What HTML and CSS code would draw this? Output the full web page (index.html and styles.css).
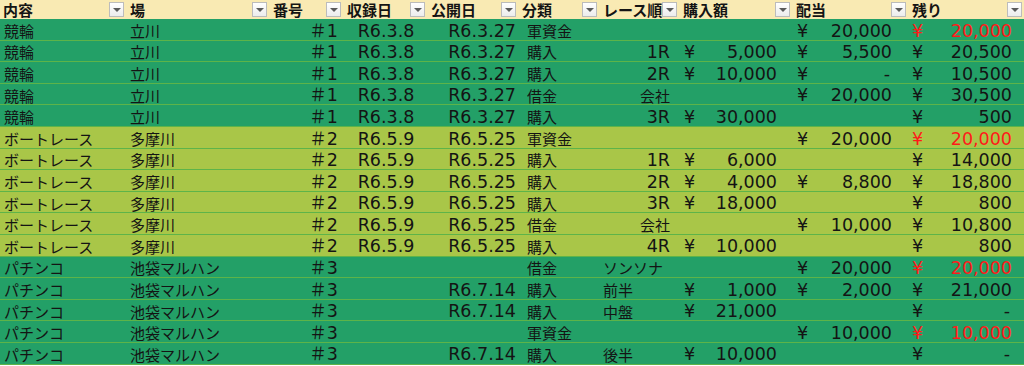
FILE: index.html
```html
<!DOCTYPE html>
<html lang="ja">
<head>
<meta charset="utf-8">
<title>収支表</title>
<link rel="stylesheet" href="styles.css">
</head>
<body>
<div class="sheet">
  <div class="row head">
    <div class="hc"><span class="hl">内容</span><span class="dd"></span></div>
    <div class="hc"><span class="hl">場</span><span class="dd"></span></div>
    <div class="hc"><span class="hl">番号</span><span class="dd"></span></div>
    <div class="hc"><span class="hl">収録日</span><span class="dd"></span></div>
    <div class="hc"><span class="hl">公開日</span><span class="dd"></span></div>
    <div class="hc"><span class="hl">分類</span><span class="dd"></span></div>
    <div class="hc"><span class="hl">レース順</span><span class="dd"></span></div>
    <div class="hc"><span class="hl">購入額</span><span class="dd"></span></div>
    <div class="hc"><span class="hl">配当</span><span class="dd"></span></div>
    <div class="hc last"><span class="hl">残り</span><span class="dd"></span></div>
  </div>

  <div class="row g">
    <div class="c k1">競輪</div><div class="c k2">立川</div><div class="c k3 num">＃1</div>
    <div class="c k4 num">R6.3.8</div><div class="c k5 num">R6.3.27</div><div class="c k6">軍資金</div>
    <div class="c k7"></div><div class="c k8"></div>
    <div class="c k9 acc num"><span>¥</span><span>20,000</span></div>
    <div class="c k10 acc num red"><span>¥</span><span>20,000</span></div>
  </div>
  <div class="row g">
    <div class="c k1">競輪</div><div class="c k2">立川</div><div class="c k3 num">＃1</div>
    <div class="c k4 num">R6.3.8</div><div class="c k5 num">R6.3.27</div><div class="c k6">購入</div>
    <div class="c k7 r num">1R</div>
    <div class="c k8 acc num"><span>¥</span><span>5,000</span></div>
    <div class="c k9 acc num"><span>¥</span><span>5,500</span></div>
    <div class="c k10 acc num"><span>¥</span><span>20,500</span></div>
  </div>
  <div class="row g">
    <div class="c k1">競輪</div><div class="c k2">立川</div><div class="c k3 num">＃1</div>
    <div class="c k4 num">R6.3.8</div><div class="c k5 num">R6.3.27</div><div class="c k6">購入</div>
    <div class="c k7 r num">2R</div>
    <div class="c k8 acc num"><span>¥</span><span>10,000</span></div>
    <div class="c k9 acc num"><span>¥</span><span class="dash">-</span></div>
    <div class="c k10 acc num"><span>¥</span><span>10,500</span></div>
  </div>
  <div class="row g">
    <div class="c k1">競輪</div><div class="c k2">立川</div><div class="c k3 num">＃1</div>
    <div class="c k4 num">R6.3.8</div><div class="c k5 num">R6.3.27</div><div class="c k6">借金</div>
    <div class="c k7 r">会社</div><div class="c k8"></div>
    <div class="c k9 acc num"><span>¥</span><span>20,000</span></div>
    <div class="c k10 acc num"><span>¥</span><span>30,500</span></div>
  </div>
  <div class="row g">
    <div class="c k1">競輪</div><div class="c k2">立川</div><div class="c k3 num">＃1</div>
    <div class="c k4 num">R6.3.8</div><div class="c k5 num">R6.3.27</div><div class="c k6">購入</div>
    <div class="c k7 r num">3R</div>
    <div class="c k8 acc num"><span>¥</span><span>30,000</span></div>
    <div class="c k9"></div>
    <div class="c k10 acc num"><span>¥</span><span>500</span></div>
  </div>

  <div class="row l">
    <div class="c k1">ボートレース</div><div class="c k2">多摩川</div><div class="c k3 num">＃2</div>
    <div class="c k4 num">R6.5.9</div><div class="c k5 num">R6.5.25</div><div class="c k6">軍資金</div>
    <div class="c k7"></div><div class="c k8"></div>
    <div class="c k9 acc num"><span>¥</span><span>20,000</span></div>
    <div class="c k10 acc num red"><span>¥</span><span>20,000</span></div>
  </div>
  <div class="row l">
    <div class="c k1">ボートレース</div><div class="c k2">多摩川</div><div class="c k3 num">＃2</div>
    <div class="c k4 num">R6.5.9</div><div class="c k5 num">R6.5.25</div><div class="c k6">購入</div>
    <div class="c k7 r num">1R</div>
    <div class="c k8 acc num"><span>¥</span><span>6,000</span></div>
    <div class="c k9"></div>
    <div class="c k10 acc num"><span>¥</span><span>14,000</span></div>
  </div>
  <div class="row l">
    <div class="c k1">ボートレース</div><div class="c k2">多摩川</div><div class="c k3 num">＃2</div>
    <div class="c k4 num">R6.5.9</div><div class="c k5 num">R6.5.25</div><div class="c k6">購入</div>
    <div class="c k7 r num">2R</div>
    <div class="c k8 acc num"><span>¥</span><span>4,000</span></div>
    <div class="c k9 acc num"><span>¥</span><span>8,800</span></div>
    <div class="c k10 acc num"><span>¥</span><span>18,800</span></div>
  </div>
  <div class="row l">
    <div class="c k1">ボートレース</div><div class="c k2">多摩川</div><div class="c k3 num">＃2</div>
    <div class="c k4 num">R6.5.9</div><div class="c k5 num">R6.5.25</div><div class="c k6">購入</div>
    <div class="c k7 r num">3R</div>
    <div class="c k8 acc num"><span>¥</span><span>18,000</span></div>
    <div class="c k9"></div>
    <div class="c k10 acc num"><span>¥</span><span>800</span></div>
  </div>
  <div class="row l">
    <div class="c k1">ボートレース</div><div class="c k2">多摩川</div><div class="c k3 num">＃2</div>
    <div class="c k4 num">R6.5.9</div><div class="c k5 num">R6.5.25</div><div class="c k6">借金</div>
    <div class="c k7 r">会社</div><div class="c k8"></div>
    <div class="c k9 acc num"><span>¥</span><span>10,000</span></div>
    <div class="c k10 acc num"><span>¥</span><span>10,800</span></div>
  </div>
  <div class="row l">
    <div class="c k1">ボートレース</div><div class="c k2">多摩川</div><div class="c k3 num">＃2</div>
    <div class="c k4 num">R6.5.9</div><div class="c k5 num">R6.5.25</div><div class="c k6">購入</div>
    <div class="c k7 r num">4R</div>
    <div class="c k8 acc num"><span>¥</span><span>10,000</span></div>
    <div class="c k9"></div>
    <div class="c k10 acc num"><span>¥</span><span>800</span></div>
  </div>

  <div class="row g">
    <div class="c k1">パチンコ</div><div class="c k2">池袋マルハン</div><div class="c k3 num">＃3</div>
    <div class="c k4"></div><div class="c k5"></div><div class="c k6">借金</div>
    <div class="c k7 lft">ソンソナ</div><div class="c k8"></div>
    <div class="c k9 acc num"><span>¥</span><span>20,000</span></div>
    <div class="c k10 acc num red"><span>¥</span><span>20,000</span></div>
  </div>
  <div class="row g">
    <div class="c k1">パチンコ</div><div class="c k2">池袋マルハン</div><div class="c k3 num">＃3</div>
    <div class="c k4"></div><div class="c k5 num">R6.7.14</div><div class="c k6">購入</div>
    <div class="c k7 lft">前半</div>
    <div class="c k8 acc num"><span>¥</span><span>1,000</span></div>
    <div class="c k9 acc num"><span>¥</span><span>2,000</span></div>
    <div class="c k10 acc num"><span>¥</span><span>21,000</span></div>
  </div>
  <div class="row g">
    <div class="c k1">パチンコ</div><div class="c k2">池袋マルハン</div><div class="c k3 num">＃3</div>
    <div class="c k4"></div><div class="c k5 num">R6.7.14</div><div class="c k6">購入</div>
    <div class="c k7 lft">中盤</div>
    <div class="c k8 acc num"><span>¥</span><span>21,000</span></div>
    <div class="c k9"></div>
    <div class="c k10 acc num"><span>¥</span><span class="dash">-</span></div>
  </div>
  <div class="row g">
    <div class="c k1">パチンコ</div><div class="c k2">池袋マルハン</div><div class="c k3 num">＃3</div>
    <div class="c k4"></div><div class="c k5"></div><div class="c k6">軍資金</div>
    <div class="c k7"></div><div class="c k8"></div>
    <div class="c k9 acc num"><span>¥</span><span>10,000</span></div>
    <div class="c k10 acc num red"><span>¥</span><span>10,000</span></div>
  </div>
  <div class="row g">
    <div class="c k1">パチンコ</div><div class="c k2">池袋マルハン</div><div class="c k3 num">＃3</div>
    <div class="c k4"></div><div class="c k5 num">R6.7.14</div><div class="c k6">購入</div>
    <div class="c k7 lft">後半</div>
    <div class="c k8 acc num"><span>¥</span><span>10,000</span></div>
    <div class="c k9"></div>
    <div class="c k10 acc num"><span>¥</span><span class="dash">-</span></div>
  </div>
</div>
</body>
</html>
```

FILE: styles.css
```css
html, body {
  margin: 0;
  padding: 0;
  background: #ffffff;
}

body {
  font-family: "Noto Sans CJK JP", sans-serif;
  font-size: 15px;
  color: #141414;
  overflow: hidden;
}

.sheet {
  width: 1024px;
}

.row {
  display: grid;
  grid-template-columns: 127px 143px 74px 84px 91px 81px 80px 113px 116px 115px;
  height: 21.6px;
  box-sizing: border-box;
  border-bottom: 1px solid #5db449;
}

.head {
  height: 19px;
  background: #f9eab3;
  border-bottom: none;
}

.g { background: #23a067; }
.l { background: #a9c648; }

/* header cells */
.hc {
  display: flex;
  align-items: center;
  justify-content: space-between;
  padding: 0 3px 0 3px;
  min-width: 0;
  font-weight: 700;
  font-size: 15px;
  line-height: 1;
  white-space: nowrap;
}
.hc.last { padding-right: 2px; }

.hl { min-width: 0; }

.dd {
  position: relative;
  flex-shrink: 0;
  width: 15px;
  height: 15px;
  box-sizing: border-box;
  border: 1px solid #bcbcbc;
  background: linear-gradient(#ffffff, #ececec);
  display: flex;
  align-items: center;
  justify-content: center;
}
.dd::after {
  content: "";
  width: 0;
  height: 0;
  margin-top: 1px;
  border-left: 4px solid transparent;
  border-right: 4px solid transparent;
  border-top: 4px solid #5a5a5a;
}

/* body cells */
.c {
  display: flex;
  align-items: center;
  box-sizing: border-box;
  padding-top: 2px;
  white-space: nowrap;
  overflow: hidden;
  line-height: 1;
  min-width: 0;
}

.num {
  font-family: "DejaVu Sans", "Noto Sans CJK JP", sans-serif;
  font-size: 17.5px;
  padding-top: 4px;
}

.k1 { padding-left: 4px; }
.k2 { padding-left: 3px; }
.k3 { justify-content: flex-end; padding-right: 6px; }
.k4 { justify-content: center; }
.k5 { justify-content: flex-end; padding-right: 3px; }
.k6 { padding-left: 8px; }
.k7.r { justify-content: flex-end; padding-right: 10px; }
.k7.lft { padding-left: 3px; }

.acc { justify-content: space-between; }
.k8.acc { padding-left: 4px; padding-right: 16px; }
.k9.acc { padding-left: 4px; padding-right: 17px; }
.k10.acc { padding-left: 3px; padding-right: 12px; }

.dash { padding-right: 2px; }

.red { color: #ff1a1a; }
```
